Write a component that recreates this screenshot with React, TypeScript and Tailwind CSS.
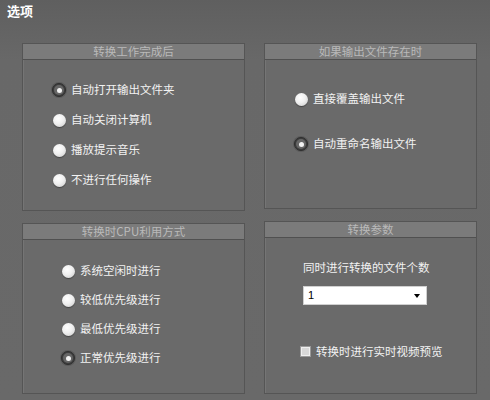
import React from "react";

const FONT = { fontFamily: '"Noto Sans CJK SC", "Noto Sans", sans-serif' };

function Radio({ checked }: { checked?: boolean }) {
  if (checked) {
    return (
      <span className="flex items-center justify-center w-[14px] h-[14px] rounded-full bg-[#3e3e3e] border border-[#2e2e2e] shadow-[0_0_0_1px_rgba(0,0,0,0.15)]">
        <span className="flex items-center justify-center w-[10px] h-[10px] rounded-full bg-[#666]">
          <span className="w-[5px] h-[5px] rounded-full bg-[#f2f2f2]" />
        </span>
      </span>
    );
  }
  return (
    <span className="w-[13px] h-[13px] rounded-full bg-[radial-gradient(circle_at_40%_35%,#ffffff_0%,#f0f0f0_45%,#c8c8c8_100%)] shadow-[0_1px_1px_rgba(0,0,0,0.35)]" />
  );
}

function RadioRow({ label, checked, className = "" }: { label: string; checked?: boolean; className?: string }) {
  return (
    <div className={`flex items-center h-[18px] ${className}`}>
      <span className="w-[14px] flex justify-center">
        <Radio checked={checked} />
      </span>
      <span className="ml-[5px] text-[11.5px] text-[#f2f2f2]">{label}</span>
    </div>
  );
}

function Panel({ title, children, className = "" }: { title: string; children: React.ReactNode; className?: string }) {
  return (
    <div className={`flex flex-col border border-[#555] bg-[#6a6a6a] shadow-[inset_1px_1px_0_rgba(255,255,255,0.08)] ${className}`}>
      <div className="h-[16px] flex items-center justify-center bg-[#7b7b7b] border-b border-[#505050] text-[11.5px] leading-none text-[#b9b9b9]">
        {title}
      </div>
      {children}
    </div>
  );
}

export default function App() {
  return (
    <div
      className="w-[490px] h-[400px] overflow-hidden flex flex-col bg-[linear-gradient(180deg,#5f5f5f_0%,#686868_15%,#696969_100%)] select-none"
      style={FONT}
    >
      {/* 标题 */}
      <div className="h-[43px] pl-[7px] pt-[3px] text-[13px] font-bold text-white leading-[16px]">选项</div>

      <div className="grid grid-cols-[223px_213px] gap-x-[19px] pl-[22px]">
        {/* 转换工作完成后 */}
        <Panel title="转换工作完成后" className="h-[168px]">
          <div className="flex flex-col pl-[29px] pt-[21px] gap-[12px]">
            <RadioRow label="自动打开输出文件夹" checked />
            <RadioRow label="自动关闭计算机" />
            <RadioRow label="播放提示音乐" />
            <RadioRow label="不进行任何操作" />
          </div>
        </Panel>

        {/* 如果输出文件存在时 */}
        <Panel title="如果输出文件存在时" className="h-[166px]">
          <div className="flex flex-col pl-[29px] pt-[30px] gap-[27px]">
            <RadioRow label="直接覆盖输出文件" />
            <RadioRow label="自动重命名输出文件" checked />
          </div>
        </Panel>
      </div>

      <div className="grid grid-cols-[223px_213px] gap-x-[19px] pl-[22px] mt-[10px] items-end">
        {/* 转换时CPU利用方式 */}
        <Panel title="转换时CPU利用方式" className="h-[171px]">
          <div className="flex flex-col pl-[38px] pt-[22px] gap-[11px]">
            <RadioRow label="系统空闲时进行" />
            <RadioRow label="较低优先级进行" />
            <RadioRow label="最低优先级进行" />
            <RadioRow label="正常优先级进行" checked />
          </div>
        </Panel>

        {/* 转换参数 */}
        <Panel title="转换参数" className="h-[173px]">
          <div className="flex flex-col pl-[38px] pt-[21px]">
            <div className="text-[11.5px] text-[#f2f2f2] leading-[16px]">同时进行转换的文件个数</div>
            <div className="mt-[11px] w-[124px] h-[19px] bg-white border border-[#d0d0d0] flex items-center justify-between pl-[4px] pr-[6px]">
              <span className="text-[11px] text-black" style={{ fontFamily: '"Liberation Sans", sans-serif' }}>1</span>
              <span className="w-0 h-0 border-l-[3px] border-r-[3px] border-t-[4px] border-l-transparent border-r-transparent border-t-black" />
            </div>
            <div className="mt-[38px] -ml-[3px] flex items-center">
              <span className="w-[11px] h-[11px] bg-[#d8d8d8] border border-[#9a9a9a] shadow-[inset_0_0_0_1px_#efefef]" />
              <span className="ml-[5px] text-[11.5px] text-[#f2f2f2]">转换时进行实时视频预览</span>
            </div>
          </div>
        </Panel>
      </div>
    </div>
  );
}
